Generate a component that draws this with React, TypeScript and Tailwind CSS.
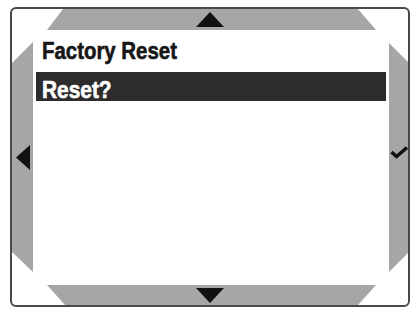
import React from 'react';

const font = { fontFamily: '"Liberation Sans", Arial, sans-serif' };

const Tri = ({ dir }: { dir: 'up' | 'down' | 'left' }) => {
  if (dir === 'left') {
    return (
      <svg width="14" height="25" viewBox="0 0 14 25">
        <polygon points="14,0 14,25 0,12.5" fill="#111" />
      </svg>
    );
  }
  return (
    <svg width="28" height="15" viewBox="0 0 28 15">
      <polygon points={dir === 'up' ? '14,0 28,15 0,15' : '0,0 28,0 14,15'} fill="#111" />
    </svg>
  );
};

export default function App() {
  return (
    <div className="w-[412px] h-[309px] bg-white pl-[10px] pt-[7px]">
      <div className="w-[400px] h-[300px] rounded-[6px] border-2 border-[#4a4a4a] flex flex-col overflow-hidden bg-white">
        {/* top bezel */}
        <div className="h-[21px] bg-[#a6a6a6] flex items-center justify-center [clip-path:polygon(51px_0,calc(100%_-_50px)_0,calc(100%_-_32px)_100%,35px_100%)]">
          <Tri dir="up" />
        </div>

        <div className="flex-1 flex">
          {/* left bezel */}
          <div className="w-[21px] bg-[#a6a6a6] flex items-center justify-center [clip-path:polygon(0_33px,100%_12px,100%_calc(100%_-_13px),0_calc(100%_-_33px))]">
            <Tri dir="left" />
          </div>

          <div className="flex-1 bg-white px-[3px] pt-[9px]" style={font}>
            <div className="pl-[6px] text-[24px] leading-none font-bold text-[#161616] [-webkit-text-stroke:0.6px_#161616]">
              <span className="inline-block origin-left scale-x-[0.85]">Factory Reset</span>
            </div>
            <div className="mt-[9px] h-[29px] bg-[#2e2b2c] pl-[6px] pt-[6px] text-[24px] leading-none font-bold text-white [-webkit-text-stroke:0.6px_#ffffff]">
              <span className="inline-block origin-left scale-x-[0.87]">Reset?</span>
            </div>
          </div>

          {/* right bezel */}
          <div className="w-[19px] bg-[#a6a6a6] flex items-center justify-end [clip-path:polygon(0_13px,100%_32px,100%_calc(100%_-_32px),0_calc(100%_-_13px))]">
            <svg width="18" height="13" viewBox="0 0 18 13" className="-mt-[10px]">
              <path d="M1.5 6 L6.5 10.5 L17 1.5" fill="none" stroke="#111" strokeWidth="3.5" strokeLinejoin="miter" />
            </svg>
          </div>
        </div>

        {/* bottom bezel */}
        <div className="h-[20px] bg-[#a6a6a6] flex items-center justify-center [clip-path:polygon(35px_0,calc(100%_-_32px)_0,calc(100%_-_50px)_100%,53px_100%)]">
          <Tri dir="down" />
        </div>
      </div>
    </div>
  );
}
